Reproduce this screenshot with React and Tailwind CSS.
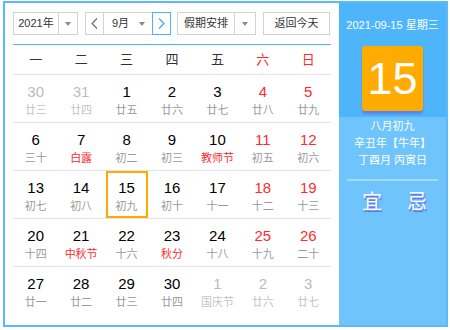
import React from "react";

const rows = [
  [
    { d: "30", l: "廿三", out: true },
    { d: "31", l: "廿四", out: true },
    { d: "1", l: "廿五" },
    { d: "2", l: "廿六" },
    { d: "3", l: "廿七" },
    { d: "4", l: "廿八", we: true },
    { d: "5", l: "廿九", we: true },
  ],
  [
    { d: "6", l: "三十" },
    { d: "7", l: "白露", fest: true },
    { d: "8", l: "初二" },
    { d: "9", l: "初三" },
    { d: "10", l: "教师节", fest: true },
    { d: "11", l: "初五", we: true },
    { d: "12", l: "初六", we: true },
  ],
  [
    { d: "13", l: "初七" },
    { d: "14", l: "初八" },
    { d: "15", l: "初九", sel: true },
    { d: "16", l: "初十" },
    { d: "17", l: "十一" },
    { d: "18", l: "十二", we: true },
    { d: "19", l: "十三", we: true },
  ],
  [
    { d: "20", l: "十四" },
    { d: "21", l: "中秋节", fest: true },
    { d: "22", l: "十六" },
    { d: "23", l: "秋分", fest: true },
    { d: "24", l: "十八" },
    { d: "25", l: "十九", we: true },
    { d: "26", l: "二十", we: true },
  ],
  [
    { d: "27", l: "廿一" },
    { d: "28", l: "廿二" },
    { d: "29", l: "廿三" },
    { d: "30", l: "廿四" },
    { d: "1", l: "国庆节", out: true },
    { d: "2", l: "廿六", out: true },
    { d: "3", l: "廿七", out: true },
  ],
];

const weekdays = ["一", "二", "三", "四", "五", "六", "日"];

const Caret = () => (
  <span className="w-0 h-0 border-l-[3.5px] border-r-[3.5px] border-t-[4px] border-l-transparent border-r-transparent border-t-[#8a8a8a]" />
);

function DayCell({ day }) {
  const numColor = day.out
    ? "text-[#bcbcbc]"
    : day.we
    ? "text-[#ff2b2b]"
    : "text-black";
  const lunarColor = day.out
    ? "text-[#c4c4c4]"
    : day.fest
    ? "text-[#ff2b2b]"
    : "text-[#9a9a9a]";

  return (
    <div className="flex justify-center">
      <div
        className={`w-[42px] h-[47px] border-2 flex flex-col items-center pt-[6px] ${
          day.sel ? "border-[#ffa800]" : "border-transparent"
        }`}
      >
        <span className={`text-[15px] leading-[18px] ${numColor}`}>{day.d}</span>
        <span className={`mt-[2px] text-[11px] leading-[14px] whitespace-nowrap ${lunarColor}`}>
          {day.l}
        </span>
      </div>
    </div>
  );
}

export default function App() {
  return (
    <div className="w-[450px] h-[330px] bg-white pl-[3px] pt-[1px] font-['Liberation_Sans','Noto_Sans_CJK_SC',sans-serif]">
      <div className="w-[445px] h-[326px] border-2 border-[#5cb9f8] flex">
        {/* calendar */}
        <div className="w-[334px] px-2 pt-[9px]">
          <div className="flex h-[23px] text-[11px] text-[#333]">
            <div className="w-[65px] flex border border-[#d2d2d2]">
              <span className="flex-1 flex items-center justify-center">2021年</span>
              <span className="w-[19px] border-l border-[#d2d2d2] flex items-center justify-center">
                <Caret />
              </span>
            </div>
            <div className="ml-[7px] w-[86px] flex border border-[#d2d2d2]">
              <span className="w-[18px] border-r border-[#d2d2d2] flex items-center justify-center">
                <svg width="7" height="11" viewBox="0 0 7 11">
                  <polyline points="6,0.5 1,5.5 6,10.5" fill="none" stroke="#666" strokeWidth="1.1" />
                </svg>
              </span>
              <span className="flex-1 flex items-center pl-[8px]">
                9月
                <span className="ml-auto mr-[7px] flex">
                  <Caret />
                </span>
              </span>
              <span className="w-[19px] -my-px -mr-px border border-[#4ab4fa] flex items-center justify-center">
                <svg width="7" height="11" viewBox="0 0 7 11">
                  <polyline points="1,0.5 6,5.5 1,10.5" fill="none" stroke="#3aa8f5" strokeWidth="1.2" />
                </svg>
              </span>
            </div>
            <div className="ml-[6px] w-[79px] flex border border-[#d2d2d2]">
              <span className="flex-1 flex items-center justify-center">假期安排</span>
              <span className="w-[21px] border-l border-[#d2d2d2] flex items-center justify-center">
                <Caret />
              </span>
            </div>
            <div className="ml-[7px] w-[67px] border border-[#d2d2d2] flex items-center justify-center">
              返回今天
            </div>
          </div>

          <div className="mt-[9px] h-px bg-[#4ab4fa]" />

          <div className="grid grid-cols-7 h-[30px] border-b border-[#e3e3e3] text-[13px] text-[#333]">
            {weekdays.map((w, i) => (
              <div
                key={w}
                className={`flex items-center justify-center ${i > 4 ? "text-[#ff2b2b]" : ""}`}
              >
                {w}
              </div>
            ))}
          </div>

          {rows.map((row, ri) => (
            <div
              key={ri}
              className={`grid grid-cols-7 h-[48px] ${
                ri < rows.length - 1 ? "border-b border-[#e3e3e3]" : ""
              }`}
            >
              {row.map((day, di) => (
                <DayCell key={di} day={day} />
              ))}
            </div>
          ))}
        </div>

        {/* side panel */}
        <div className="flex-1 flex flex-col text-white">
          <div className="h-[114px] bg-[#4fb5fa] flex flex-col items-center">
            <span className="pt-[15px] text-[11px] leading-[14px] whitespace-nowrap">
              2021-09-15 星期三
            </span>
            <div className="mt-[14px] w-[61px] h-[65px] rounded-[3px] bg-[#ffab00] shadow-[0_3px_2px_rgba(90,95,225,0.55)] flex items-center justify-center text-[45px] leading-none">
              15
            </div>
          </div>
          <div className="flex-1 bg-[#6fc4fc] flex flex-col">
            <div className="pt-[1px] flex flex-col items-center text-[11px] leading-[17px] whitespace-nowrap">
              <span>八月初九</span>
              <span>辛丑年【牛年】</span>
              <span>丁酉月 丙寅日</span>
            </div>
            <div className="mt-[10px] mx-2 h-[2px] bg-[#a6dafd]" />
            <div className="mt-[9px] pl-[4px] flex justify-center gap-[25px] text-[20px] leading-[24px] [text-shadow:1px_2px_1px_#6470e6]">
              <span>宜</span>
              <span>忌</span>
            </div>
          </div>
        </div>
      </div>
    </div>
  );
}
